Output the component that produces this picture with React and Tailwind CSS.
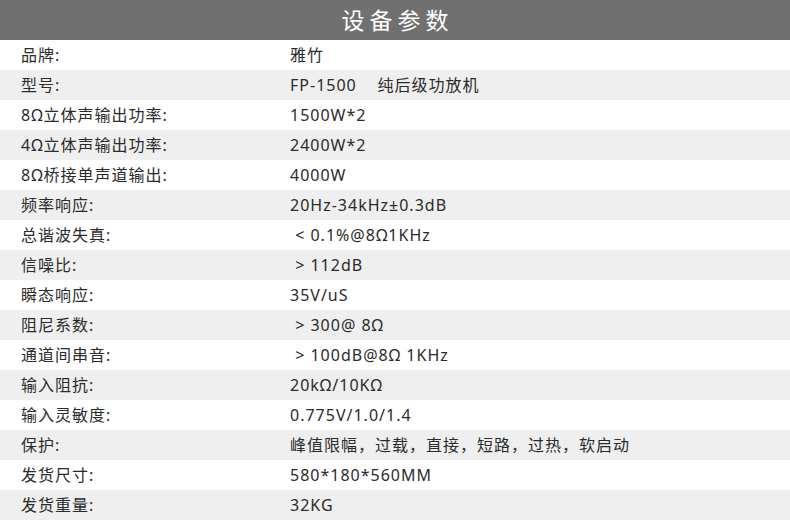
const rows = [
  ['品牌:', '雅竹'],
  ['型号:', 'FP-1500    纯后级功放机'],
  ['8Ω立体声输出功率:', '1500W*2'],
  ['4Ω立体声输出功率:', '2400W*2'],
  ['8Ω桥接单声道输出:', '4000W'],
  ['频率响应:', '20Hz-34kHz±0.3dB'],
  ['总谐波失真:', ' < 0.1%@8Ω1KHz'],
  ['信噪比:', ' > 112dB'],
  ['瞬态响应:', '35V/uS'],
  ['阻尼系数:', ' > 300@ 8Ω'],
  ['通道间串音:', ' > 100dB@8Ω 1KHz'],
  ['输入阻抗:', '20kΩ/10KΩ'],
  ['输入灵敏度:', '0.775V/1.0/1.4'],
  ['保护:', '峰值限幅，过载，直接，短路，过热，软启动'],
  ['发货尺寸:', '580*180*560MM'],
  ['发货重量:', '32KG'],
];

export default function App() {
  return (
    <div
      className="w-[790px] h-[520px] bg-white overflow-hidden"
      style={{ fontFamily: '"Noto Sans", "Noto Sans CJK SC", sans-serif' }}
    >
      {/* Header */}
      <div className="h-10 bg-[#707070] flex items-center justify-center">
        <h1 className="text-[23px] text-white tracking-[5px] pl-[5px] leading-none">设备参数</h1>
      </div>

      {/* Spec rows */}
      {rows.map(([label, value], i) => (
        <div
          key={label}
          className={`h-[30px] flex items-center text-[16px] tracking-[1px] text-[#2b2b2b] ${i % 2 === 1 ? 'bg-[#efefef]' : 'bg-white'}`}
        >
          <span className="w-[290px] pl-[21px] shrink-0">{label}</span>
          <span className="whitespace-pre">{value}</span>
        </div>
      ))}
    </div>
  );
}
